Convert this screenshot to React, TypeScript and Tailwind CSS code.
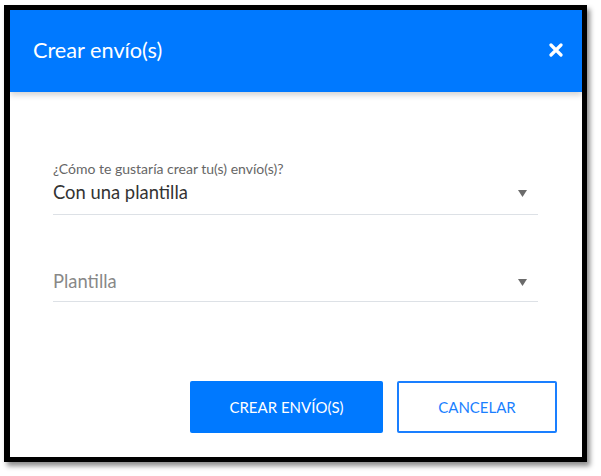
function Caret() {
  return (
    <svg width="9" height="7" viewBox="0 0 9 7" className="mr-[11px]">
      <path d="M0 0 H9 L4.5 7 Z" fill="#6b6b6b" />
    </svg>
  );
}

export default function App() {
  return (
    <div className="w-[601px] h-[476px] bg-white pt-[5px] pl-[4px]" style={{ fontFamily: "Lato, 'Open Sans', sans-serif" }}>
      <div className="w-[583px] h-[457px] border-black border-t-[5px] border-b-[5px] border-l-[6px] border-r-[5px] bg-white flex flex-col shadow-[3px_4px_5px_rgba(0,0,0,0.45)]">
        <div className="h-[82px] bg-[#0079ff] flex items-center justify-between pl-[23px] pr-[19px] shadow-[0_3px_6px_rgba(0,0,0,0.18)] relative">
          <h1 className="text-white text-[21.7px] leading-none">Crear envío(s)</h1>
          <svg width="14" height="14" viewBox="0 0 14 14" className="mb-[2px]">
            <path d="M2 2 L12 12 M12 2 L2 12" stroke="white" strokeWidth="3.2" strokeLinecap="round" />
          </svg>
        </div>

        <div className="flex-1 flex flex-col pl-[43px] pr-[44px] pt-[69px]">
          <div className="border-b border-[#dde1e6] pb-[10px]">
            <label className="block text-[14px] leading-[16px] text-[#666]">¿Cómo te gustaría crear tu(s) envío(s)?</label>
            <div className="flex items-center justify-between mt-[5px] h-[22px]">
              <span className="text-[18.4px] text-[#333]">Con una plantilla</span>
              <Caret />
            </div>
          </div>

          <div className="border-b border-[#dde1e6] pb-[8px] mt-[56px]">
            <div className="flex items-center justify-between h-[22px]">
              <span className="text-[18.4px] text-[#888]">Plantilla</span>
              <Caret />
            </div>
          </div>
        </div>

        <div className="flex justify-end gap-[14px] pr-[25px] pb-[24px]">
          <button className="w-[193px] h-[52px] bg-[#0079ff] text-white text-[15px] rounded-[2px]">CREAR ENVÍO(S)</button>
          <button className="w-[160px] h-[52px] border-2 border-[#1a7fff] text-[#1a7fff] text-[15px] rounded-[2px] bg-white">CANCELAR</button>
        </div>
      </div>
    </div>
  );
}
